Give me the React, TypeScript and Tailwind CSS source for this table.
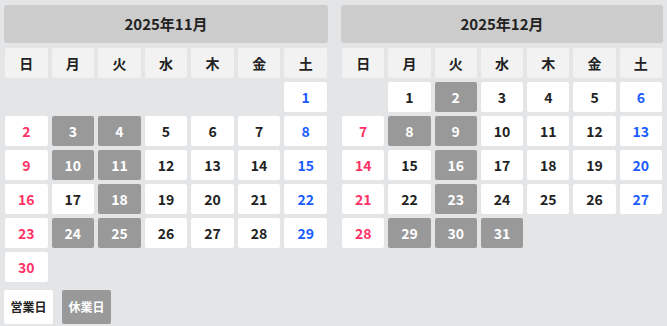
import React from "react";

type Month = {
  title: string;
  offset: number;
  days: number;
  holidays: number[];
};

const months: Month[] = [
  { title: "2025年11月", offset: 6, days: 30, holidays: [3, 4, 10, 11, 18, 24, 25] },
  { title: "2025年12月", offset: 1, days: 31, holidays: [2, 8, 9, 16, 23, 29, 30, 31] },
];

const weekdays = ["日", "月", "火", "水", "木", "金", "土"];

const Calendar = ({ month }: { month: Month }) => {
  const cells: (number | null)[] = [];
  for (let i = 0; i < month.offset; i++) cells.push(null);
  for (let d = 1; d <= month.days; d++) cells.push(d);

  return (
    <div className="w-[324px]">
      <div className="h-[38px] bg-[#cccccc] rounded-[3px] flex items-center justify-center text-[15px] font-bold text-[#222222]">
        {month.title}
      </div>

      <div className="mt-[5px] px-[1px] grid grid-cols-7 gap-x-[4px] gap-y-[4px]">
        {weekdays.map((w) => (
          <div
            key={w}
            className="h-[30px] bg-[#f2f2f2] rounded-[2px] flex items-center justify-center text-[14px] font-bold text-[#222222]"
          >
            {w}
          </div>
        ))}

        {cells.map((d, i) => {
          if (d === null) return <div key={"e" + i} className="h-[30px]" />;
          const col = i % 7;
          const closed = month.holidays.includes(d);
          let color = "text-[#222222]";
          if (col === 0) color = "text-[#ff3366]";
          if (col === 6) color = "text-[#1a5cff]";
          return (
            <div
              key={d}
              className={
                closed
                  ? "h-[30px] bg-[#999999] rounded-[2px] flex items-center justify-center text-[14px] font-bold text-white"
                  : `h-[30px] bg-white rounded-[2px] flex items-center justify-center text-[14px] font-bold ${color}`
              }
            >
              {d}
            </div>
          );
        })}
      </div>
    </div>
  );
};

export default function App() {
  return (
    <div
      className="w-[667px] h-[326px] bg-[#e4e5e7] pt-[5px] px-[4px]"
      style={{ fontFamily: '"Noto Sans CJK JP", "Noto Sans", sans-serif' }}
    >
      <div className="flex gap-[13px]">
        <div>
          <Calendar month={months[0]} />
          {/* legend */}
          <div className="mt-[8px] flex gap-[9px]">
            <div className="w-[49px] h-[34px] bg-white rounded-[2px] flex items-center justify-center text-[12px] font-bold text-[#222222]">
              営業日
            </div>
            <div className="w-[49px] h-[34px] bg-[#999999] rounded-[2px] flex items-center justify-center text-[12px] font-bold text-white">
              休業日
            </div>
          </div>
        </div>
        <Calendar month={months[1]} />
      </div>
    </div>
  );
}
